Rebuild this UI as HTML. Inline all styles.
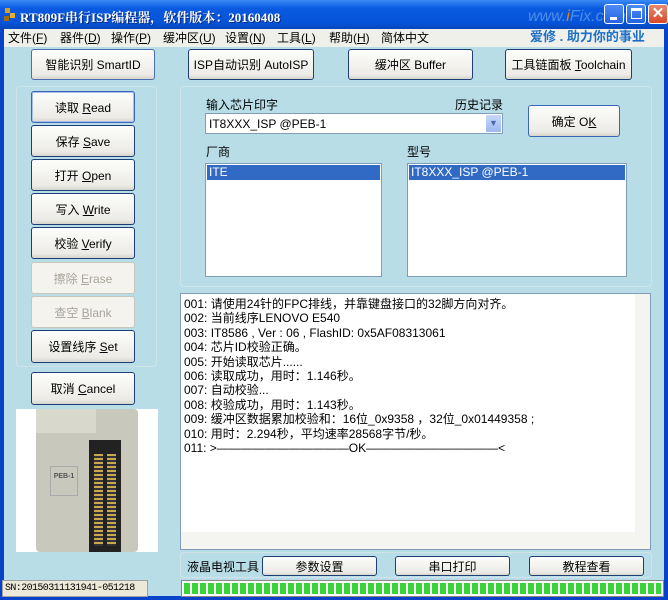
<!DOCTYPE html>
<html><head><meta charset="utf-8"><style>
*{box-sizing:border-box;margin:0;padding:0}
body{width:668px;height:600px;overflow:hidden;background:#0842c8;font-family:"Liberation Sans","Noto Sans CJK SC",sans-serif;font-size:12px;color:#000;position:relative}
.abs{position:absolute}
#title{left:0;top:0;width:668px;height:29px;background:linear-gradient(#3a8af5,#0a5ae0 30%,#0553d8 80%,#0846b8);}
#title .t{left:20px;top:7px;color:#fff;font-family:"Liberation Serif","Noto Serif CJK SC",serif;font-weight:bold;font-size:13px;text-shadow:1px 1px #0a2a80}
.wb{top:4px;width:20px;height:20px;border:1px solid #fff;border-radius:3px;background:linear-gradient(#4d8cf7,#2663e0)}
#client{left:4px;top:29px;width:660px;height:567px;background:#b8dde6}
#menu{left:4px;top:29px;width:660px;height:18px;background:#f0f0ea}
#menu span{position:absolute;top:1px;font-size:12px;line-height:16px}
.btn{position:absolute;background:linear-gradient(#fdfdfb,#ecebe6 85%,#d8d5cc);border:1px solid #1e3e78;border-radius:3px;text-align:center;font-size:12px;display:flex;align-items:center;justify-content:center;white-space:pre}
.btn.d{color:#a9a59a;border-color:#c9c6bb;background:#f4f3ee}
.grp{position:absolute;border:1px solid #d0e4e8;border-radius:4px}
.box{position:absolute;background:#fff;border:1px solid #7f9db9}
.sel{position:absolute;left:1px;top:1px;right:1px;height:15px;background:#316ac5;color:#fff;padding-left:2px;line-height:15px}
#log div{height:14.4px;line-height:14.4px;white-space:nowrap;overflow:visible}
u{text-decoration:underline}
</style></head><body>
<div id="title" class="abs">
<div class="abs" style="left:5px;top:8px;width:5px;height:5px;background:#d8a020"></div>
<div class="abs" style="left:10px;top:13px;width:5px;height:5px;background:#e0b030"></div>
<div class="abs" style="left:4px;top:16px;width:5px;height:5px;background:#a07010"></div>
<div class="abs t">RT809F串行ISP编程器，软件版本：20160408</div>
<div class="abs" style="left:528px;top:8px;color:#4b8ee8;font-size:16px;font-style:italic">www.<span style="color:#f08010">i</span>Fix.com.cn</div>
<div class="abs wb" style="left:604px"><div class="abs" style="left:5px;top:12px;width:7px;height:3px;background:#fff"></div></div>
<div class="abs wb" style="left:626px"><div class="abs" style="left:4px;top:3px;width:11px;height:11px;border:1px solid #fff;border-top-width:3px"></div></div>
<div class="abs wb" style="left:648px;background:linear-gradient(#e88a70,#d8482a);color:#fff;font-weight:bold;font-size:15px;text-align:center;line-height:17px">✕</div>
</div>
<div id="client" class="abs"></div>
<div id="menu" class="abs">
<span style="left:4px">文件(<u>F</u>)</span><span style="left:56px">器件(<u>D</u>)</span><span style="left:107px">操作(<u>P</u>)</span><span style="left:159px">缓冲区(<u>U</u>)</span><span style="left:221px">设置(<u>N</u>)</span><span style="left:273px">工具(<u>L</u>)</span><span style="left:325px">帮助(<u>H</u>)</span><span style="left:377px">简体中文</span>
<span style="left:526px;top:0;color:#1d6fc8;font-weight:bold;font-size:13px">爱修 . 助力你的事业</span>
</div>
<div class="btn" style="left:31px;top:49px;width:124px;height:31px;border-color:#4a6fb0"><span>智能识别 SmartID</span></div>
<div class="btn" style="left:188px;top:49px;width:126px;height:31px"><span>ISP自动识别 AutoISP</span></div>
<div class="btn" style="left:348px;top:49px;width:125px;height:31px"><span>缓冲区 Buffer</span></div>
<div class="btn" style="left:505px;top:49px;width:127px;height:31px"><span>工具链面板 <u>T</u>oolchain</span></div>

<div class="grp" style="left:16px;top:86px;width:141px;height:281px"></div>
<div class="btn" style="left:31px;top:91px;width:104px;height:32px;border-color:#3a66b8;box-shadow:inset 0 0 0 1px #a8c0ec"><span>读取 <u>R</u>ead</span></div>
<div class="btn" style="left:31px;top:125px;width:104px;height:32px"><span>保存 <u>S</u>ave</span></div>
<div class="btn" style="left:31px;top:159px;width:104px;height:32px"><span>打开 <u>O</u>pen</span></div>
<div class="btn" style="left:31px;top:193px;width:104px;height:32px"><span>写入 <u>W</u>rite</span></div>
<div class="btn" style="left:31px;top:227px;width:104px;height:32px"><span>校验 <u>V</u>erify</span></div>
<div class="btn d" style="left:31px;top:262px;width:104px;height:32px"><span>擦除 <u>E</u>rase</span></div>
<div class="btn d" style="left:31px;top:296px;width:104px;height:32px"><span>查空 <u>B</u>lank</span></div>
<div class="btn" style="left:31px;top:330px;width:104px;height:33px"><span>设置线序 <u>S</u>et</span></div>
<div class="btn" style="left:31px;top:372px;width:104px;height:33px"><span>取消 <u>C</u>ancel</span></div>

<div class="abs" style="left:16px;top:409px;width:142px;height:143px;background:#fff">
<div class="abs" style="left:20px;top:0;width:102px;height:143px;background:#c8c8bc;border-radius:4px"></div>
<div class="abs" style="left:20px;top:0;width:60px;height:24px;background:#d8d8cc"></div>
<div class="abs" style="left:34px;top:57px;width:28px;height:30px;border:1px solid #aaa;font-size:7px;font-weight:bold;color:#555;text-align:center;padding-top:6px">PEB-1</div>
<div class="abs" style="left:73px;top:31px;width:32px;height:112px;background:#222"></div>
<div class="abs" style="left:78px;top:45px;width:9px;height:92px;background:repeating-linear-gradient(#c8a850 0 2px,#333 2px 4px)"></div>
<div class="abs" style="left:91px;top:45px;width:9px;height:92px;background:repeating-linear-gradient(#c8a850 0 2px,#333 2px 4px)"></div>
</div>

<div class="grp" style="left:180px;top:86px;width:472px;height:201px"></div>
<div class="abs" style="left:206px;top:96px">输入芯片印字</div>
<div class="abs" style="left:455px;top:96px">历史记录</div>
<div class="box" style="left:205px;top:113px;width:298px;height:21px;padding:3px 0 0 3px">IT8XXX_ISP @PEB-1
<div class="abs" style="right:1px;top:1px;width:15px;height:17px;background:linear-gradient(#c8d8fb,#9ab8f0);color:#4d6aa8;font-size:9px;text-align:center;line-height:17px">▼</div></div>
<div class="btn" style="left:528px;top:105px;width:92px;height:32px;border-color:#3a66b8"><span>确定 O<u>K</u></span></div>
<div class="abs" style="left:206px;top:143px">厂商</div>
<div class="abs" style="left:407px;top:143px">型号</div>
<div class="box" style="left:205px;top:163px;width:177px;height:114px"><div class="sel">ITE</div></div>
<div class="box" style="left:407px;top:163px;width:220px;height:114px"><div class="sel">IT8XXX_ISP @PEB-1</div></div>

<div class="box" id="log" style="left:180px;top:293px;width:471px;height:257px;padding:3px 0 0 3px">
<div>001: 请使用24针的FPC排线，并靠键盘接口的32脚方向对齐。</div>
<div>002: 当前线序LENOVO E540</div>
<div>003: IT8586 , Ver : 06 , FlashID: 0x5AF08313061</div>
<div>004: 芯片ID校验正确。</div>
<div>005: 开始读取芯片......</div>
<div>006: 读取成功，用时：1.146秒。</div>
<div>007: 自动校验...</div>
<div>008: 校验成功，用时：1.143秒。</div>
<div>009: 缓冲区数据累加校验和：16位_0x9358 ，32位_0x01449358 ;</div>
<div>010: 用时：2.294秒，平均速率28568字节/秒。</div>
<div>011: >———————————OK———————————<</div>
<div class="abs" style="left:0;top:238px;width:454px;height:17px;background:#f4f4f0"></div>
<div class="abs" style="left:454px;top:0;width:15px;height:255px;background:#f4f4f0"></div>
</div>

<div class="grp" style="left:180px;top:552px;width:472px;height:26px"></div>
<div class="abs" style="left:187px;top:558px">液晶电视工具</div>
<div class="btn" style="left:262px;top:556px;width:115px;height:20px"><span>参数设置</span></div>
<div class="btn" style="left:395px;top:556px;width:115px;height:20px"><span>串口打印</span></div>
<div class="btn" style="left:529px;top:556px;width:115px;height:20px"><span>教程查看</span></div>

<div class="abs" style="left:2px;top:580px;width:146px;height:17px;background:#ece9d8;border:1px solid #a0a0a0;font-family:'Liberation Mono',monospace;font-size:10px;letter-spacing:-0.6px;white-space:nowrap;overflow:hidden;padding:2px 2px">SN:20150311131941-051218</div>
<div class="abs" style="left:181px;top:580px;width:483px;height:17px;background:#fff;border:1px solid #888;padding:2px"><div style="width:100%;height:100%;background:repeating-linear-gradient(90deg,#39d43a 0 6px,#fff 6px 8px)"></div></div>
</body></html>
